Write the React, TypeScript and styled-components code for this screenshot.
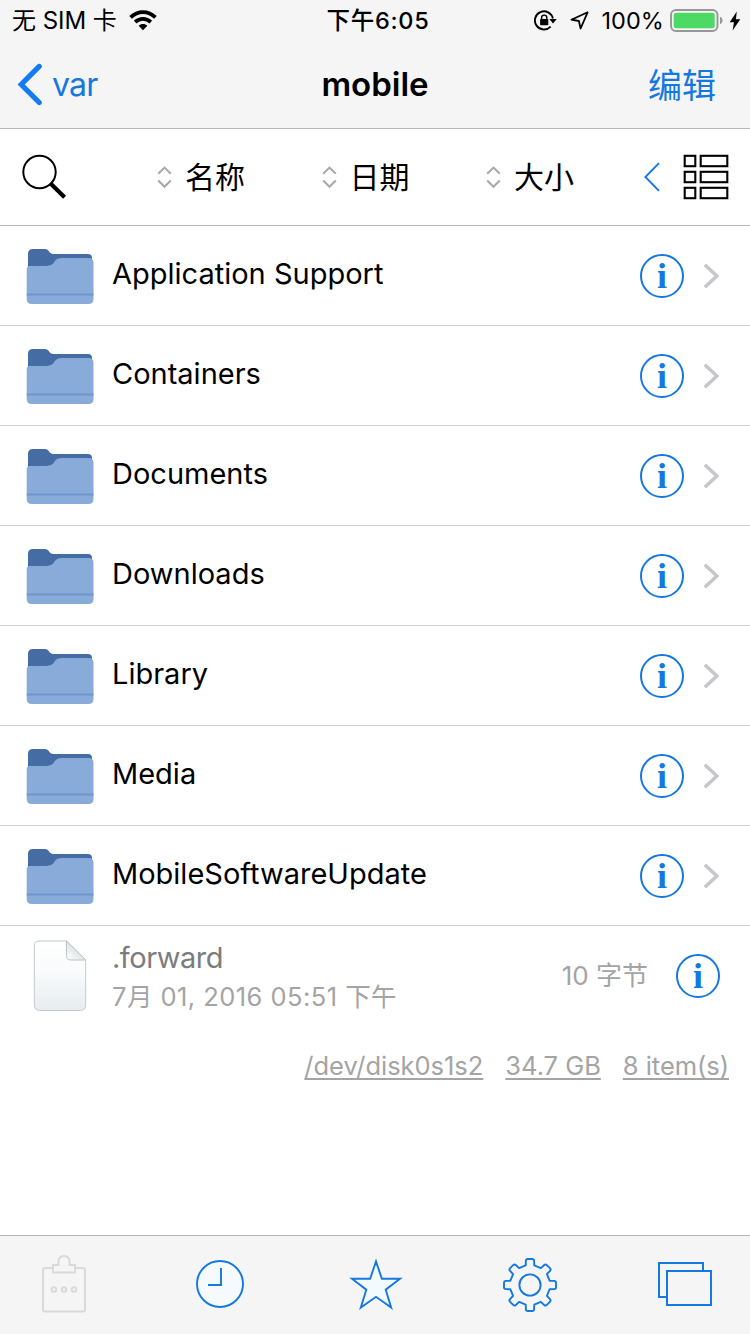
import React from 'react';
import styled, { createGlobalStyle } from 'styled-components';

const BLUE = '#1478e0';
const BAR = '#f5f5f5';
const HAIRLINE = '#b4b6b8';

const GlobalStyle = createGlobalStyle`
  * { box-sizing: border-box; }
  body {
    margin: 0;
    background: #fff;
    color: #000;
    font-family: Inter, "Noto Sans CJK SC", sans-serif;
  }
  svg { display: block; flex: none; }
`;

const Screen = styled.div`
  width: 750px;
  height: 1334px;
  display: flex;
  flex-direction: column;
  overflow: hidden;
`;

const Header = styled.header`
  height: 129px;
  background: ${BAR};
  border-bottom: 1px solid ${HAIRLINE};
`;

const ThreeColumns = styled.div`
  display: grid;
  grid-template-columns: 1fr auto 1fr;
  align-items: center;
`;

const StatusBar = styled(ThreeColumns)`
  height: 40px;
  padding: 1px 9px 0 12px;
`;

const NavBar = styled(ThreeColumns)`
  height: 88px;
  padding: 0 17px;
`;

const Side = styled.div<{ $end?: boolean; $gap?: number; $inset?: number }>`
  display: flex;
  align-items: center;
  justify-content: ${p => (p.$end ? 'flex-end' : 'flex-start')};
  gap: ${p => p.$gap ?? 0}px;
  padding-right: ${p => p.$inset ?? 0}px;
`;

const StatusIcons = styled(Side)`
  & > :nth-child(2) { margin-left: 13px; }
  & > :nth-child(3) { margin-left: 13px; }
  & > :nth-child(4) { margin-left: 6px; }
  & > :nth-child(5) { margin-left: 6px; }
`;

const Label = styled.span<{ $size: number; $weight?: number; $color?: string; $spacing?: number }>`
  font-size: ${p => p.$size}px;
  font-weight: ${p => p.$weight ?? 400};
  color: ${p => p.$color ?? '#000'};
  letter-spacing: ${p => p.$spacing ?? 0}px;
  line-height: 1.2;
  white-space: nowrap;
`;

const BarLabel = styled(Label)<{ $drop?: number; $indent?: number }>`
  padding: ${p => p.$drop ?? 2}px 0 0 ${p => p.$indent ?? 0}px;
`;

const SortBar = styled.div`
  height: 97px;
  display: flex;
  align-items: center;
  padding: 0 21px;
  border-bottom: 1px solid ${HAIRLINE};
`;

const SortGroup = styled.div`
  flex: 1;
  display: flex;
  justify-content: space-between;
  padding: 0 70px 0 90px;
`;

const SortButton = styled.div`
  display: flex;
  align-items: center;
  gap: 13px;
`;

const Row = styled.div<{ $last?: boolean }>`
  height: 100px;
  display: flex;
  align-items: center;
  padding-right: 30px;
  border-bottom: 1px solid ${p => (p.$last ? 'transparent' : '#d3d3d5')};
`;

const IconCell = styled.div<{ $drop?: number }>`
  width: 112px;
  padding: ${p => p.$drop ?? 0}px 0 0 26px;
  flex: none;
`;

const RowText = styled.div<{ $gap?: number }>`
  flex: 1;
  display: flex;
  flex-direction: column;
  gap: ${p => p.$gap ?? 0}px;
  padding: ${p => (p.$gap ? '2px 0 0' : '0 0 3px')};
`;

const InfoCircle = styled.div`
  width: 44px;
  height: 44px;
  flex: none;
  border: 2px solid ${BLUE};
  border-radius: 50%;
  color: ${BLUE};
  font: bold 36px/41px "Liberation Serif", serif;
  text-align: center;
`;

const Summary = styled.div`
  flex: 1;
  display: flex;
  justify-content: flex-end;
  align-items: flex-start;
  gap: 22px;
  padding: 25px 21px 0 0;
`;

const SummaryItem = styled(Label)`
  text-decoration: underline;
  text-decoration-thickness: 2px;
  text-underline-offset: 3px;
`;

const TabBar = styled.nav`
  height: 99px;
  flex: none;
  display: flex;
  padding-top: 19px;
  background: ${BAR};
  border-top: 1px solid ${HAIRLINE};
`;

const Tab = styled.div<{ $width: number }>`
  width: ${p => p.$width}px;
  display: flex;
  justify-content: center;
`;

const Wifi = () => (
  <svg width="28" height="21" viewBox="0 0 28 21" fill="none" stroke="#000" strokeWidth="3.8">
    <path d="M1.6 7.4C8.8.4 19.2.4 26.4 7.4" />
    <path d="M6.2 12.1C10.8 7.9 17.2 7.9 21.8 12.1" />
    <path d="M9.6 15.7C12.2 13.3 15.8 13.3 18.4 15.7L14 20.2Z" fill="#000" stroke="none" />
  </svg>
);

const RotationLock = () => (
  <svg width="23" height="21" viewBox="0 0 23 21">
    <path d="M16.6 16.7A9.1 9.1 0 1 1 18.9 8.5" fill="none" stroke="#000" strokeWidth="1.9" />
    <path d="M15.4 9.1H22.8L19 13.6Z" />
    <rect x="6.1" y="9" width="8.2" height="6.3" rx="0.8" />
    <path d="M7.6 9.4V7.7a2.6 2.6 0 0 1 5.2 0v1.7" fill="none" stroke="#000" strokeWidth="1.4" />
  </svg>
);

const Location = () => (
  <svg width="19" height="19" viewBox="0 0 19 19" fill="none" stroke="#000" strokeWidth="1.8" strokeLinejoin="round">
    <path d="M17.6 1.3L1.4 8.7L8.9 10L10.6 17.5Z" />
  </svg>
);

const Battery = () => (
  <svg width="53" height="23" viewBox="0 0 53 23">
    <rect x="1" y="1" width="46.5" height="21" rx="5" fill="none" stroke="#97979a" strokeWidth="1.9" />
    <rect x="3.7" y="3.7" width="41" height="15.6" rx="2.4" fill="#4cd964" />
    <path d="M50 7.8c3.4 1.2 3.4 6.2 0 7.4Z" fill="#97979a" />
  </svg>
);

const Bolt = () => (
  <svg width="12" height="20" viewBox="0 0 12 20">
    <path d="M7.8.5L.7 11.2H5L3.6 19.4L11.3 8.2H6.9Z" />
  </svg>
);

const BackChevron = () => (
  <svg width="26" height="43" viewBox="0 0 26 43" fill="none" stroke="#127cf0" strokeWidth="5.2" strokeLinecap="round" strokeLinejoin="miter">
    <path d="M22.2 3.4L4.2 21.5L22.2 39.5" />
  </svg>
);

const Magnifier = () => (
  <svg width="46" height="46" viewBox="0 0 46 46" fill="none" stroke="#000">
    <circle cx="18.5" cy="18" r="16.2" strokeWidth="2" />
    <path d="M29.3 29.3L43.6 43.3" strokeWidth="4.2" />
  </svg>
);

const SortArrows = () => (
  <svg width="15" height="24" viewBox="0 0 15 24" fill="none" stroke="#a9a9a9" strokeWidth="2.1">
    <path d="M1.2 8.8L7.5 2.6L13.8 8.8M1.2 15.6L7.5 21.8L13.8 15.6" />
  </svg>
);

const ThinChevron = () => (
  <svg width="16" height="30" viewBox="0 0 16 30" fill="none" stroke={BLUE} strokeWidth="1.9">
    <path d="M15 1.2L1.4 15L15 28.8" />
  </svg>
);

const ListIcon = () => (
  <svg width="46" height="46" viewBox="0 0 46 46" fill="none" stroke="#000" strokeWidth="2.1">
    {[1.8, 17.8, 33.8].map(y => (
      <React.Fragment key={y}>
        <rect x="1.7" y={y} width="10.6" height="10.4" />
        <rect x="17.7" y={y} width="26.6" height="10.4" />
      </React.Fragment>
    ))}
  </svg>
);

const Folder = () => (
  <svg width="68" height="56" viewBox="0 0 68 56">
    <path d="M2 22V5Q2 0 7 0H18.5Q22 0 23.4 3Q24.5 5 27.5 5H62Q66 5 66 9V22Z" fill="#456da3" />
    <path d="M.7 20Q.7 17 4 17H21Q25 17 27.4 14.2L29 11.7Q31 9 35 9H62.5Q67.5 9 67.5 14V50Q67.5 55 62.5 55H5.7Q.7 55 .7 50Z" fill="#88abda" />
    <path d="M.7 45.5H67.5" stroke="#7096cd" strokeWidth="2" />
  </svg>
);

const Page = () => (
  <svg width="70" height="74" viewBox="0 0 70 74">
    <defs>
      <linearGradient id="sheet" x1="0" y1="0" x2="0" y2="1">
        <stop offset="0" stopColor="#fff" />
        <stop offset=".45" stopColor="#f9fbfc" />
        <stop offset="1" stopColor="#e6ecef" />
      </linearGradient>
      <linearGradient id="fold" x1="0" y1="1" x2=".6" y2=".4">
        <stop offset="0" stopColor="#fff" />
        <stop offset="1" stopColor="#dce1e4" />
      </linearGradient>
    </defs>
    <path d="M13 2H40.5L59.7 21V66Q59.7 71.5 54.2 71.5H13.8Q8.3 71.5 8.3 66V7Q8.3 2 13 2Z" fill="url(#sheet)" stroke="#c3c9cd" />
    <path d="M40.5 2V16.5Q40.5 21 45 21H59.7Z" fill="url(#fold)" stroke="#bcc2c6" />
  </svg>
);

const RowChevron = () => (
  <svg width="17" height="26" viewBox="0 0 17 26" fill="none" stroke="#c7c7cc" strokeWidth="3.6">
    <path d="M1.8 1.8L13.8 13L1.8 24.2" />
  </svg>
);

const Clipboard = () => (
  <svg width="48" height="60" viewBox="0 0 48 60" fill="none" stroke="#dadada" strokeWidth="2">
    <path d="M13 13H5Q3 13 3 15V54.5Q3 56.5 5 56.5H43Q45 56.5 45 54.5V15Q45 13 43 13H35" />
    <path d="M13 17.5V10H18.5V6.5Q18.5 1 24 1T29.5 6.5V10H35V17.5Z" />
    <circle cx="14" cy="34.5" r="2.3" />
    <circle cx="24" cy="34.5" r="2.3" />
    <circle cx="34" cy="34.5" r="2.3" />
  </svg>
);

const Clock = () => (
  <svg width="48" height="60" viewBox="0 0 48 60" fill="none" stroke={BLUE} strokeWidth="1.9">
    <circle cx="24" cy="29" r="23" fill="#f5fafd" />
    <path d="M25 13V30H12" />
  </svg>
);

const Star = () => (
  <svg width="54" height="60" viewBox="0 0 54 60" fill="#f3fafd" stroke={BLUE} strokeWidth="1.9">
    <path d="M27 6.4L32.9 23.8H51L36.7 34.7L42.2 52.6L27 41.8L11.8 52.6L17.3 34.7L3 23.8H21.1Z" />
  </svg>
);

const toothPath = Array.from({ length: 8 }, (_, i) => {
  const a = (i * Math.PI) / 4;
  const at = (x: number, y: number) =>
    `${(x * Math.cos(a) - y * Math.sin(a)).toFixed(2)} ${(x * Math.sin(a) + y * Math.cos(a)).toFixed(2)}`;
  return `${i ? 'L' : 'M'}${at(-4.3, -19.6)}L${at(-4.1, -24.2)}Q${at(-4, -26)} ${at(-2.2, -26)}L${at(2.2, -26)}Q${at(4, -26)} ${at(4.1, -24.2)}L${at(4.3, -19.6)}`;
}).join('') + 'Z';

const Gear = () => (
  <svg width="54" height="60" viewBox="-27 -30 54 60" fill="none" stroke={BLUE} strokeWidth="1.9" strokeLinejoin="round">
    <path d={toothPath} />
    <circle r="10.6" />
  </svg>
);

const Windows = () => (
  <svg width="56" height="60" viewBox="0 0 56 60" fill="none" stroke={BLUE} strokeWidth="2">
    <path d="M10 42H2V8H46V16" />
    <rect x="10" y="16" width="44" height="34" />
  </svg>
);

const folders = ['Application Support', 'Containers', 'Documents', 'Downloads', 'Library', 'Media', 'MobileSoftwareUpdate'];

export default function App() {
  return (
    <Screen>
      <GlobalStyle />
      <Header>
        <StatusBar>
          <Side $gap={12}>
            <BarLabel $size={24} $spacing={-0.05}>无 SIM 卡</BarLabel>
            <Wifi />
          </Side>
          <BarLabel $size={23.5} $weight={500} $spacing={0.75} $indent={3}>下午6:05</BarLabel>
          <StatusIcons $end>
            <RotationLock />
            <Location />
            <BarLabel $size={23.5} $spacing={0.05}>100%</BarLabel>
            <Battery />
            <Bolt />
          </StatusIcons>
        </StatusBar>
        <NavBar>
          <Side $gap={9}>
            <BackChevron />
            <BarLabel $size={32} $spacing={-0.8} $color={BLUE}>var</BarLabel>
          </Side>
          <BarLabel $size={33} $weight={600}>mobile</BarLabel>
          <Side $end $inset={17}>
            <BarLabel $size={34} $drop={4} $color={BLUE}>编辑</BarLabel>
          </Side>
        </NavBar>
      </Header>
      <SortBar>
        <Magnifier />
        <SortGroup>
          {['名称', '日期', '大小'].map(name => (
            <SortButton key={name}>
              <SortArrows />
              <Label $size={30}>{name}</Label>
            </SortButton>
          ))}
        </SortGroup>
        <Side $gap={23}>
          <ThinChevron />
          <ListIcon />
        </Side>
      </SortBar>
      {folders.map(name => (
        <Row key={name}>
          <IconCell $drop={2}><Folder /></IconCell>
          <RowText><Label $size={29}>{name}</Label></RowText>
          <Side $gap={19}>
            <InfoCircle>i</InfoCircle>
            <RowChevron />
          </Side>
        </Row>
      ))}
      <Row $last>
        <IconCell><Page /></IconCell>
        <RowText $gap={6}>
          <Label $size={29} $spacing={-0.5} $color="#7c7c7c">.forward</Label>
          <Label $size={25.5} $spacing={0.45} $color="#a4a4a4">7月 01, 2016 05:51 下午</Label>
        </RowText>
        <Side $gap={28}>
          <Label $size={26} $color="#a4a4a4">10 字节</Label>
          <InfoCircle>i</InfoCircle>
        </Side>
      </Row>
      <Summary>
        {['/dev/disk0s1s2', '34.7 GB', '8 item(s)'].map(text => (
          <SummaryItem key={text} $size={25.5} $spacing={-0.03} $color="#a4a4a4">{text}</SummaryItem>
        ))}
      </Summary>
      <TabBar>
        <Tab $width={128}><Clipboard /></Tab>
        <Tab $width={184}><Clock /></Tab>
        <Tab $width={128}><Star /></Tab>
        <Tab $width={180}><Gear /></Tab>
        <Tab $width={130}><Windows /></Tab>
      </TabBar>
    </Screen>
  );
}
